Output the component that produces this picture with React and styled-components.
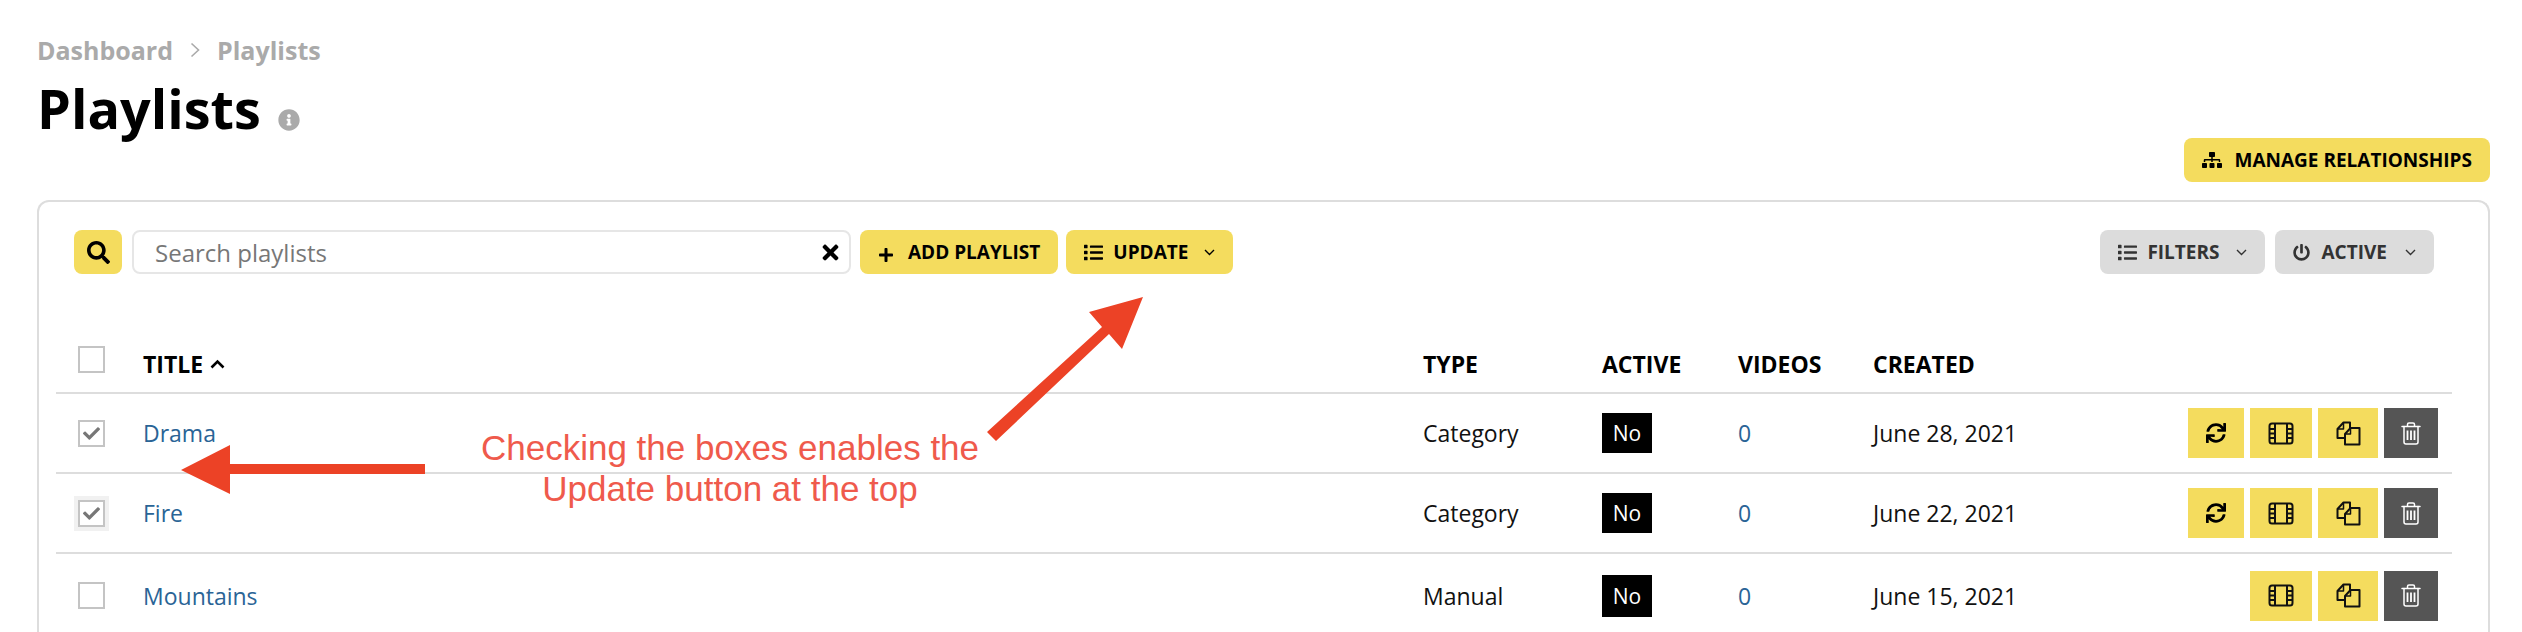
import styled, { createGlobalStyle } from 'styled-components';
import {
  FaSearch,
  FaTimes,
  FaPlus,
  FaList,
  FaSitemap,
  FaPowerOff,
  FaSync,
  FaInfoCircle,
  FaCheck,
} from 'react-icons/fa';

const playlists = [
  { id: 1, title: 'Drama', type: 'Category', created: 'June 28, 2021', checked: true, refresh: true },
  { id: 2, title: 'Fire', type: 'Category', created: 'June 22, 2021', checked: true, refresh: true, focused: true },
  { id: 3, title: 'Mountains', type: 'Manual', created: 'June 15, 2021', refresh: false, last: true },
];

const FilmIcon = () => (
  <svg width='26' height='23' viewBox='0 0 26 23' fill='none' stroke='#111' strokeWidth='2'>
    <rect x='1.5' y='1.5' width='23' height='20' rx='2.5' />
    <path d='M7 1.5v20M19 1.5v20M1.5 7h5.5M1.5 11.5h5.5M1.5 16h5.5M19 7h5.5M19 11.5h5.5M19 16h5.5' />
  </svg>
);

const CopyIcon = () => (
  <svg width='25' height='25' viewBox='0 0 25 25' fill='none' stroke='#111' strokeWidth='2' strokeLinejoin='round'>
    <path d='M9 17H1.5V8L7.5 1.5H14V7' />
    <path d='M7.5 1.5V8H1.5' strokeWidth='1.5' />
    <path d='M9 23.5V13L14.5 7H23.5V23.5Z' fill='#f4dc5e' />
    <path d='M14.5 7V13H9' strokeWidth='1.5' />
  </svg>
);

const TrashIcon = () => (
  <svg width='20' height='23' viewBox='0 0 20 23' fill='none' stroke='#fff' strokeWidth='1.5' strokeLinecap='round'>
    <path d='M1 4.5h18M6.5 4.5V2.5a1.5 1.5 0 0 1 1.5-1.5h4a1.5 1.5 0 0 1 1.5 1.5v2' />
    <path d='M3 4.5V20a2 2 0 0 0 2 2h10a2 2 0 0 0 2-2V4.5' />
    <path d='M6.5 8.5v9.5M10 8.5v9.5M13.5 8.5v9.5' strokeWidth='1.8' strokeLinecap='butt' />
  </svg>
);

const SortUpIcon = () => (
  <svg width='15' height='10' viewBox='0 0 15 10' fill='none' stroke='#000' strokeWidth='2.6'>
    <path d='M1.5 8.5L7.5 2.5L13.5 8.5' />
  </svg>
);

const BreadcrumbChevron = () => (
  <svg width='10' height='16' viewBox='0 0 10 16' fill='none' stroke='#aaa' strokeWidth='1.6'>
    <path d='M1.5 1.5L8.5 8L1.5 14.5' />
  </svg>
);

const Caret = () => (
  <CaretSvg width='11' height='7' viewBox='0 0 11 7' fill='none' stroke='currentColor' strokeWidth='1.4'>
    <path d='M1 1L5.5 5.5L10 1' />
  </CaretSvg>
);

const App = () => {
  return (
    <Page>
      <GlobalStyle />
      <Header>
        <HeaderLeft>
          <Breadcrumbs>
            <span>Dashboard</span>
            <BreadcrumbChevron />
            <span>Playlists</span>
          </Breadcrumbs>
          <TitleRow>
            <Title>Playlists</Title>
            <FaInfoCircle size={22} color='#aaa' />
          </TitleRow>
        </HeaderLeft>
        <Button>
          <FaSitemap size={20} />
          <ManageLabel>MANAGE RELATIONSHIPS</ManageLabel>
        </Button>
      </Header>

      <Panel>
        <Toolbar>
          <ToolbarGroup>
            <SearchButton>
              <FaSearch size={23} />
            </SearchButton>
            <SearchBox>
              <SearchInput placeholder='Search playlists' readOnly />
              <FaTimes size={23} color='#000' />
            </SearchBox>
            <Button $gap={14}>
              <PlusIcon size={16} />
              ADD PLAYLIST
            </Button>
            <Button>
              <FaList size={19} />
              UPDATE
              <Caret />
            </Button>
          </ToolbarGroup>
          <RightGroup>
            <Button $gray>
              <FaList size={19} />
              FILTERS
              <Caret />
            </Button>
            <Button $gray $gap={12}>
              <FaPowerOff size={17} />
              ACTIVE
              <Caret />
            </Button>
          </RightGroup>
        </Toolbar>

        <Table>
          <colgroup>
            <col width='87' />
            <col width='1280' />
            <col width='179' />
            <col width='136' />
            <col width='135' />
            <col width='200' />
            <col width='379' />
          </colgroup>
          <thead>
            <tr>
              <HeadCheckCell>
                <CheckBox />
              </HeadCheckCell>
              <HeadCell>
                <SortLabel>
                  TITLE
                  <SortUpIcon />
                </SortLabel>
              </HeadCell>
              <HeadCell>TYPE</HeadCell>
              <HeadCell>ACTIVE</HeadCell>
              <HeadCell>VIDEOS</HeadCell>
              <HeadCell>CREATED</HeadCell>
              <HeadCell />
            </tr>
          </thead>
          <tbody>
            {playlists.map((item) => (
              <Row key={item.id} $last={item.last}>
                <CheckCell>
                  <CheckBox $focused={item.focused}>
                    {item.checked && <FaCheck size={17} color='#777' />}
                  </CheckBox>
                </CheckCell>
                <Cell>
                  <Link>{item.title}</Link>
                </Cell>
                <Cell>{item.type}</Cell>
                <Cell>
                  <Badge $tall={item.last}>No</Badge>
                </Cell>
                <Cell>
                  <Link>0</Link>
                </Cell>
                <Cell>{item.created}</Cell>
                <Cell>
                  <Actions>
                    {item.refresh && (
                      <ActionButton $width={56}>
                        <FaSync size={20} />
                      </ActionButton>
                    )}
                    <ActionButton $width={62}>
                      <FilmIcon />
                    </ActionButton>
                    <ActionButton $width={60}>
                      <CopyIcon />
                    </ActionButton>
                    <ActionButton $width={54} $dark>
                      <TrashIcon />
                    </ActionButton>
                  </Actions>
                </Cell>
              </Row>
            ))}
          </tbody>
        </Table>
      </Panel>

      {/* red annotations pasted on top of the screenshot */}
      <Arrows width='2522' height='632' viewBox='0 0 2522 632'>
        <polygon points='1143,297 1089,312 1102,327 987,432 996,441 1109,334 1122,349' fill='#ec4226' />
        <polygon points='181,470 230,445 230,464 425,464 425,474 230,474 230,494' fill='#ec4226' />
      </Arrows>
      <Note>
        Checking the boxes enables the
        <br />
        Update button at the top
      </Note>
    </Page>
  );
};

const GlobalStyle = createGlobalStyle`
  body {
    margin: 0;
    background: #fff;
    font-family: 'Open Sans', sans-serif;
  }
`;

const Page = styled.div`
  position: relative;
  height: 632px;
  overflow: hidden;
  padding: 34px 32px 0 37px;
  box-sizing: border-box;
  color: #111;
`;

const Header = styled.div`
  display: flex;
  justify-content: space-between;
  align-items: flex-end;
  height: 148px;
  margin-bottom: 18px;
`;

const HeaderLeft = styled.div`
  align-self: flex-start;
`;

const Breadcrumbs = styled.div`
  display: flex;
  align-items: center;
  gap: 17px;
  height: 32px;
  font-size: 25px;
  font-weight: 700;
  color: #aaa;
`;

const TitleRow = styled.div`
  display: flex;
  align-items: flex-end;
  gap: 17px;
  margin-top: 8px;
  svg {
    margin-bottom: 11px;
  }
`;

const Title = styled.h1`
  margin: 0;
  font-size: 54px;
  line-height: 68px;
  font-weight: 700;
  color: #000;
`;

const Panel = styled.div`
  border: 2px solid #ddd;
  border-bottom: 0;
  border-radius: 12px 12px 0 0;
  padding: 28px 36px 0 17px;
  height: 500px;
`;

const Toolbar = styled.div`
  display: flex;
  justify-content: space-between;
  padding: 0 18px;
`;

const ToolbarGroup = styled.div`
  display: flex;
  gap: 8px;
`;

const RightGroup = styled(ToolbarGroup)`
  gap: 10px;
`;

const Button = styled.button`
  display: inline-flex;
  align-items: center;
  gap: ${(props) => props.$gap || 10}px;
  height: 44px;
  padding: 0 18px;
  border: 0;
  border-radius: 8px;
  background: ${(props) => (props.$gray ? '#dcdcdc' : '#f4dc5e')};
  color: ${(props) => (props.$gray ? '#333' : '#000')};
  font-family: 'Open Sans', sans-serif;
  font-size: 19px;
  font-weight: 700;
  white-space: nowrap;
`;

const ManageLabel = styled.span`
  margin-left: 3px;
`;

const SearchButton = styled(Button)`
  justify-content: center;
  width: 48px;
  padding: 0;
  margin-right: 2px;
`;

const SearchBox = styled.div`
  display: flex;
  align-items: center;
  width: 719px;
  height: 44px;
  box-sizing: border-box;
  margin-right: 1px;
  padding: 0 7px 0 21px;
  border: 2px solid #e6e6e6;
  border-radius: 8px;
`;

const SearchInput = styled.input`
  flex: 1;
  border: 0;
  outline: 0;
  padding: 0;
  font-family: 'Open Sans', sans-serif;
  font-size: 24px;
  &::placeholder {
    color: #777;
    opacity: 1;
  }
`;

const PlusIcon = styled(FaPlus)`
  margin-top: 6px;
`;

const CaretSvg = styled.svg`
  margin-left: 6px;
`;

const Table = styled.table`
  width: 2396px;
  margin-top: 49px;
  border-collapse: collapse;
  table-layout: fixed;
  font-size: 23px;
`;

const HeadCell = styled.th`
  height: 70px;
  padding: 12px 0 0;
  box-sizing: border-box;
  text-align: left;
  font-size: 23px;
  font-weight: 700;
  color: #000;
  border-bottom: 2px solid #ddd;
`;

const HeadCheckCell = styled.th`
  padding: 4px 0 0 22px;
  box-sizing: border-box;
  border-bottom: 2px solid #ddd;
`;

const SortLabel = styled.span`
  display: inline-flex;
  align-items: center;
  gap: 7px;
`;

const Row = styled.tr`
  height: ${(props) => (props.$last ? 84 : 80)}px;
  border-bottom: ${(props) => (props.$last ? 0 : '2px solid #ddd')};
`;

const Cell = styled.td`
  padding: 0;
`;

const CheckCell = styled.td`
  padding: 0 0 0 22px;
`;

const CheckBox = styled.span`
  display: flex;
  align-items: center;
  justify-content: center;
  width: 27px;
  height: 27px;
  box-sizing: border-box;
  border: 2px solid #c4c4c4;
  background: #fff;
  box-shadow: ${(props) => (props.$focused ? '0 0 0 4px #f1f1f1' : 'none')};
`;

const Link = styled.a`
  color: #2a6496;
`;

const Badge = styled.span`
  display: flex;
  align-items: center;
  justify-content: center;
  width: 50px;
  height: ${(props) => (props.$tall ? 42 : 40)}px;
  background: #000;
  color: #fff;
  font-size: 21px;
`;

const Actions = styled.div`
  display: flex;
  justify-content: flex-end;
  gap: 6px;
  padding-right: 14px;
`;

const ActionButton = styled.button`
  display: flex;
  align-items: center;
  justify-content: center;
  width: ${(props) => props.$width}px;
  height: 50px;
  padding: 0;
  border: 0;
  background: ${(props) => (props.$dark ? '#555' : '#f4dc5e')};
  color: #000;
`;

const Arrows = styled.svg`
  position: absolute;
  top: 0;
  left: 0;
  pointer-events: none;
`;

const Note = styled.div`
  position: absolute;
  left: 430px;
  top: 427px;
  width: 600px;
  text-align: center;
  font-family: 'Liberation Sans', Arial, sans-serif;
  font-size: 35px;
  line-height: 41px;
  color: #ef5a4c;
`;

export default App;
